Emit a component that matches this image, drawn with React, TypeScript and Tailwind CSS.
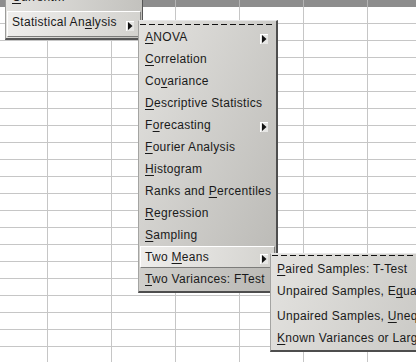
import React from "react";

type ItemDef = {
  label: string;
  m: number;
  arrow?: boolean;
  active?: boolean;
  h?: string;
};

function Label({ label, m }: { label: string; m: number }) {
  return (
    <span className="whitespace-nowrap">
      {label.slice(0, m)}
      <span className="underline decoration-1 underline-offset-[2px] [text-decoration-skip-ink:none]">
        {label.charAt(m)}
      </span>
      {label.slice(m + 1)}
    </span>
  );
}

function Arrow() {
  return (
    <span className="flex h-[10px] w-[8px] shrink-0 items-center justify-center border-l border-t border-l-white border-t-white bg-[#e6e6e4]">
      <svg width="5" height="8" viewBox="0 0 5 8">
        <path d="M0 0 L4.5 4 L0 8 Z" fill="#111" />
      </svg>
    </span>
  );
}

function Item({ label, m, arrow, active, h = "h-[22px]" }: ItemDef) {
  return (
    <div
      className={`flex ${h} items-start justify-between border pl-[4px] pr-[6px] pt-[3px] ${
        active
          ? "border-t-white border-l-white border-b-[#7c7c7a] border-r-[#7c7c7a] bg-[linear-gradient(100deg,#efeeec,#d3d2ce)]"
          : "border-transparent"
      }`}
    >
      <Label label={label} m={m} />
      {arrow && (
        <span className="self-center">
          <Arrow />
        </span>
      )}
    </div>
  );
}

function Dashes() {
  return (
    <div className="h-px w-full bg-[repeating-linear-gradient(90deg,#111_0_6px,transparent_6px_9px)]" />
  );
}

const sub1: ItemDef[] = [
  { label: "ANOVA", m: 0, arrow: true },
  { label: "Correlation", m: 0 },
  { label: "Covariance", m: 2 },
  { label: "Descriptive Statistics", m: 0 },
  { label: "Forecasting", m: 1, arrow: true },
  { label: "Fourier Analysis", m: 0 },
  { label: "Histogram", m: 0 },
  { label: "Ranks and Percentiles", m: 10 },
  { label: "Regression", m: 0 },
  { label: "Sampling", m: 0 },
  { label: "Two Means", m: 4, arrow: true, active: true },
  { label: "Two Variances: FTest", m: 0 },
];

const sub2: ItemDef[] = [
  { label: "Paired Samples: T-Test", m: 0 },
  { label: "Unpaired Samples, Equal Variances: T-Test", m: 19, h: "h-[25px]" },
  { label: "Unpaired Samples, Unequal Variances: T-Test", m: 18 },
  { label: "Known Variances or Large Sample: Z-Test", m: 0 },
];

const cols = ["w-[48px]", "w-[64px]", "w-[64px]", "w-[64px]", "w-[64px]", "w-[64px]", "w-[64px]"];
const rows = Array.from({ length: 21 }, (_, i) => i);

function Grid() {
  return (
    <div className="flex flex-col">
      <div className="flex h-[7px] bg-[#8d8d8d]">
        {cols.map((c, i) => (
          <div key={i} className={`${c} shrink-0 border-r border-r-[#b4b4b4]`} />
        ))}
      </div>
      {rows.map((r) => (
        <div key={r} className="flex h-[17px]">
          {cols.map((c, i) => (
            <div key={i} className={`${c} shrink-0 border-b border-r border-[#c6c6c6] bg-white`} />
          ))}
        </div>
      ))}
    </div>
  );
}

export default function App() {
  return (
    <div className="relative h-[362px] w-[416px] overflow-hidden bg-white font-['Liberation_Sans',Arial,sans-serif] text-[12px] leading-[14px] tracking-[0.3px] text-[#1a1a1a]">
      <Grid />

      {/* Main menu (partially visible) */}
      <div className="absolute left-[5px] top-[-14px] w-[138px] border border-b-2 border-l-[#9c9c9a] border-t-white border-r-[#555] border-b-[#555] bg-[linear-gradient(95deg,#e4e3e0,#c2c1bd)] p-px">
        <div className="flex h-[21px] items-start border border-transparent pl-[4px] pt-[1px]">
          <Label label="Current..." m={0} />
        </div>
        <div className="mt-[2px]">
          <Item label="Statistical Analysis" m={14} arrow active h="h-[26px]" />
        </div>
      </div>

      {/* Submenu 1 */}
      <div className="absolute left-[138px] top-[20px] w-[140px] border border-b-2 border-r-2 border-l-[#a4a4a2] border-t-[#e8e8e8] border-r-[#4e4e4e] border-b-[#4e4e4e] bg-[linear-gradient(115deg,#e3e2df,#b9b8b4)] px-px pb-px pt-[3px]">
        <Dashes />
        <div className="mt-px flex flex-col">
          {sub1.map((it) => (
            <Item key={it.label} {...it} />
          ))}
        </div>
      </div>

      {/* Submenu 2 */}
      <div className="absolute left-[270px] top-[253px] w-[200px] border border-b-2 border-l-[#a4a4a2] border-t-[#e8e8e8] border-b-[#4e4e4e] bg-[linear-gradient(110deg,#e3e2df,#c4c3bf)] px-px pb-[1px] pt-px">
        <Dashes />
        <div className="mt-[2px] flex flex-col">
          {sub2.map((it) => (
            <Item key={it.label} {...it} />
          ))}
        </div>
      </div>
    </div>
  );
}
